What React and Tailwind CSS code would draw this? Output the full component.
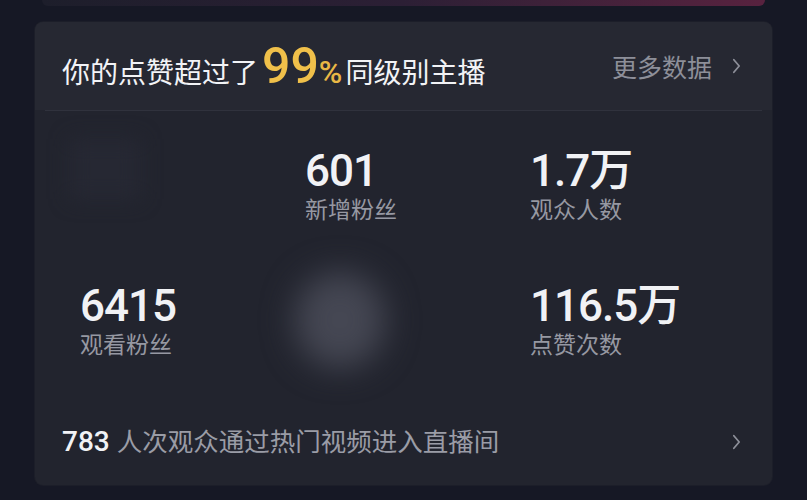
const cjk = { fontFamily: '"Noto Sans CJK SC", "Noto Sans", sans-serif' };
const num = { fontFamily: 'Roboto, "Liberation Sans", "Noto Sans CJK SC", sans-serif' };

const Chevron = ({ className }) => (
  <svg className={className} viewBox="0 0 10 18" fill="none" stroke="currentColor" strokeWidth={2} strokeLinecap="round" strokeLinejoin="round">
    <path d="M2 2l6 7-6 7" />
  </svg>
);

const Stat = ({ value, label }) => (
  <div className="flex flex-col">
    <div className="h-[44px] text-[44px] leading-[44px] font-medium text-[#f1f2f5] tracking-[-1px] overflow-visible" style={num}>
      {value}
    </div>
    <div className="mt-[4px] h-[23px] text-[23px] leading-none text-[#9698a2]" style={cjk}>
      {label}
    </div>
  </div>
);

export default function App() {
  return (
    <div className="w-[807px] h-[500px] overflow-hidden bg-[#161825] flex flex-col">
      {/* card above, cut off */}
      <div className="h-[6px] mx-[42px] rounded-b-lg bg-gradient-to-r from-[#1d1e2b] via-[#2c1f35] to-[#58223f]" />

      <div className="mt-[16px] mx-[35px] w-[737px] h-[463px] rounded-lg bg-[#22242e] flex flex-col shadow-[0_0_0_1px_#1c1e29]">
        {/* header */}
        <div className="h-[88px] flex items-center justify-between pl-[27px] pr-[31px] rounded-t-lg bg-[#262832]">
          <div className="flex items-baseline text-[28px] leading-none text-[#f2f3f6]" style={cjk}>
            <span>你的点赞超过了</span>
            <span className="ml-[4px] text-[50px] leading-none font-medium text-[#f0c04a]" style={num}>
              99
            </span>
            <span className="text-[32px] leading-none font-medium text-[#e9b845] mr-[3px]" style={num}>
              %
            </span>
            <span>同级别主播</span>
          </div>
          <div className="flex items-center gap-[20px] text-[#8d8f99]">
            <span className="text-[25px] leading-none" style={cjk}>更多数据</span>
            <Chevron className="w-[9px] h-[16px]" />
          </div>
        </div>
        <div className="h-px mx-[10px] bg-[#30323d]" />

        {/* stats */}
        <div className="grid grid-cols-[225px_225px_1fr] gap-y-[64px] pl-[45px] pt-[38px]">
          <div className="relative">
            <div className="absolute -left-[10px] -top-[10px] w-[70px] h-[60px] bg-[#262833] blur-[10px]" />
          </div>
          <Stat value="601" label="新增粉丝" />
          <Stat value="1.7万" label="观众人数" />
          <Stat value="6415" label="观看粉丝" />
          <div className="relative">
            <div className="absolute -left-[10px] -top-[12px] w-[90px] h-[96px] rounded-full bg-[#454753] blur-[16px]" />
          </div>
          <Stat value="116.5万" label="点赞次数" />
        </div>

        {/* bottom row */}
        <div className="mt-[72px] flex items-center justify-between pl-[27px] pr-[31px]">
          <div className="flex items-baseline text-[25.5px] leading-none text-[#9a9ca6]" style={cjk}>
            <span className="text-[28px] font-medium text-[#f1f2f5] mr-[7px]" style={num}>783</span>
            <span>人次观众通过热门视频进入直播间</span>
          </div>
          <Chevron className="w-[9px] h-[16px] text-[#8d8f99]" />
        </div>
      </div>
    </div>
  );
}
